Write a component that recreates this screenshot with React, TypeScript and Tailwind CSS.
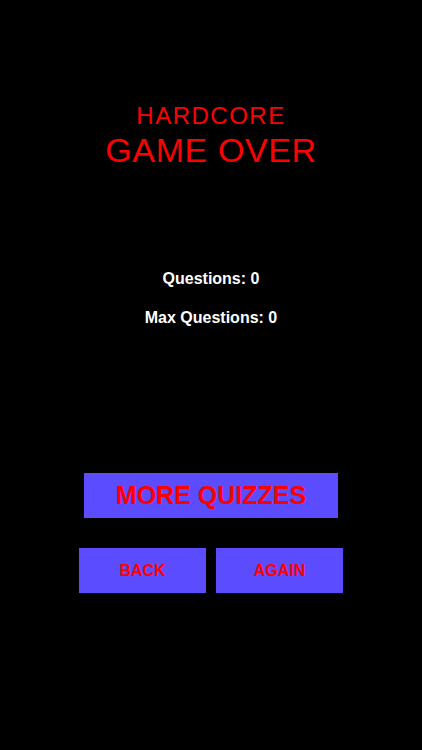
export default function App() {
  return (
    <div className="w-full h-[750px] bg-black flex flex-col items-center font-['Liberation_Sans',Arial,sans-serif]">
      <div className="mt-[102px] flex flex-col items-center text-[#ff0000]">
        <h2 className="text-[24px] leading-[28px] tracking-[1.5px]">HARDCORE</h2>
        <h1 className="mt-[1px] text-[34px] leading-[38px] tracking-[0.6px]">GAME OVER</h1>
      </div>

      <div className="mt-[100px] flex flex-col items-center text-white font-bold text-[16px] leading-[20px]">
        <p>Questions: 0</p>
        <p className="mt-[19px]">Max Questions: 0</p>
      </div>

      <button className="mt-[145px] w-[254px] h-[45px] bg-[#5b4cff] text-[#ff0000] font-bold text-[25px] leading-none">
        MORE QUIZZES
      </button>

      <div className="mt-[30px] flex gap-[10px]">
        <button className="w-[127px] h-[45px] bg-[#5b4cff] text-[#ff0000] font-bold text-[16px] leading-none">
          BACK
        </button>
        <button className="w-[127px] h-[45px] bg-[#5b4cff] text-[#ff0000] font-bold text-[16px] leading-none">
          AGAIN
        </button>
      </div>
    </div>
  );
}
